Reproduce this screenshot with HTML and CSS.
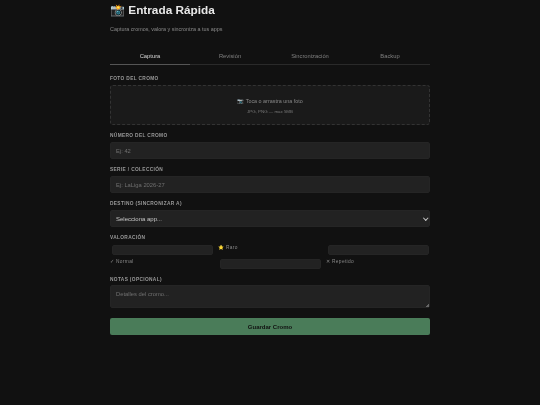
FILE: index.html
```html
<!DOCTYPE html>
<html lang="es">
<head>
    <meta charset="UTF-8">
    <meta name="viewport" content="width=device-width, initial-scale=1.0">
    <title>Entrada Rápida</title>
    <link rel="stylesheet" href="styles.css">
</head>
<body>
    <div class="container">
        <h1>📸 Entrada Rápida</h1>
        <p class="subtitle">Captura cromos, valora y sincroniza a tus apps</p>

        <div class="tabs">
            <div class="tab active">Captura</div>
            <div class="tab">Revisión</div>
            <div class="tab">Sincronización</div>
            <div class="tab">Backup</div>
        </div>

        <form>
            <div class="field">
                <label>Foto del cromo</label>
                <div class="upload">
                    <div class="upload-main">📷 Toca o arrastra una foto</div>
                    <div class="upload-hint">JPG, PNG — max 5MB</div>
                </div>
            </div>

            <div class="field">
                <label for="numero">Número del cromo</label>
                <input type="text" id="numero" placeholder="Ej: 42">
            </div>

            <div class="field">
                <label for="serie">Serie / Colección</label>
                <input type="text" id="serie" placeholder="Ej: LaLiga 2026-27">
            </div>

            <div class="field">
                <label for="destino">Destino (sincronizar a)</label>
                <div class="select-wrap">
                    <select id="destino">
                        <option>Selecciona app...</option>
                    </select>
                </div>
            </div>

            <div class="field">
                <label>Valoración</label>
                <!-- cada radio ocupa una celda, igual que su texto -->
                <div class="rating">
                    <input type="radio" name="valor" id="normal">
                    <span class="rating-text">⭐ Raro</span>
                    <input type="radio" name="valor" id="raro">
                    <span class="rating-text">✓ Normal</span>
                    <input type="radio" name="valor" id="repetido">
                    <span class="rating-text">✕ Repetido</span>
                </div>
            </div>

            <div class="field">
                <label class="notes-label" for="notas">Notas (opcional)</label>
                <div class="notes-wrap">
                    <textarea id="notas" placeholder="Detalles del cromo..."></textarea>
                </div>
            </div>

            <button type="button" class="save-button">Guardar Cromo</button>
        </form>
    </div>
</body>
</html>
```

FILE: styles.css
```css
* {
    box-sizing: border-box;
}

body {
    font-family: "Liberation Sans", Arial, sans-serif;
    margin: 0;
    height: 405px;
    overflow: hidden;
    background-color: #111111;
    color: #e0e0e0;
}

.container {
    width: 320px;
    margin: 0 auto;
    will-change: transform;
}

h1 {
    margin: 0;
    height: 19px;
    font-size: 11.8px;
    line-height: 20px;
    font-weight: 700;
    color: #e8e8e8;
}

.subtitle {
    margin: 6px 0 0;
    height: 8px;
    font-size: 5.4px;
    line-height: 8px;
    color: #8a8a8a;
}

.tabs {
    display: flex;
    margin-top: 16px;
    margin-bottom: 11px;
    border-bottom: 1px solid #2a2a2a;
}

.tab {
    flex: 1;
    height: 15px;
    font-size: 5.8px;
    line-height: 15px;
    text-align: center;
    color: #808080;
}

.tab.active {
    color: #d8d8d8;
    border-bottom: 1px solid #555555;
    height: 16px;
    margin-bottom: -1px;
}

.field {
    margin-bottom: 8px;
}

label {
    display: block;
    height: 5px;
    margin-bottom: 4px;
    font-size: 4.8px;
    line-height: 5px;
    font-weight: 700;
    letter-spacing: 0.35px;
    text-transform: uppercase;
    color: #999999;
}

.notes-label {
    margin-bottom: 3px;
}

.upload {
    height: 40px;
    padding-top: 11px;
    border: 1px dashed #333333;
    border-radius: 3px;
    background-color: #1a1a1a;
    text-align: center;
}

.upload-main {
    height: 9px;
    font-size: 5.4px;
    line-height: 9px;
    color: #888888;
}

.upload-hint {
    height: 8px;
    margin-top: 2px;
    font-size: 4.4px;
    line-height: 8px;
    color: #777777;
}

input[type="text"],
select,
textarea {
    display: block;
    width: 100%;
    height: 17px;
    padding: 0 5px;
    border: 1px solid #252525;
    border-radius: 2px;
    background-color: #222222;
    color: #e0e0e0;
    font-family: inherit;
    font-size: 5.8px;
}

::placeholder {
    color: #707070;
}

select {
    appearance: none;
    font-size: 6px;
    color: #c8c8c8;
}

/* flecha pequeña del select */
.select-wrap,
.notes-wrap {
    position: relative;
}

.select-wrap::after {
    content: "";
    position: absolute;
    right: 3px;
    top: 6px;
    width: 2.5px;
    height: 2.5px;
    border-right: 1px solid #c8c8c8;
    border-bottom: 1px solid #c8c8c8;
    transform: rotate(45deg);
}

.rating {
    display: grid;
    grid-template-columns: repeat(3, 1fr);
    column-gap: 4px;
    row-gap: 4px;
    margin-top: 5px;
}

.rating input {
    appearance: none;
    display: block;
    height: 10px;
    margin: 0 1px 0 2px;
    border: 1px solid #252525;
    border-radius: 2px;
    background-color: #222222;
}

.rating-text {
    height: 6px;
    font-size: 4.8px;
    line-height: 6px;
    letter-spacing: 0.35px;
    color: #888888;
}

textarea {
    height: 23px;
    padding: 5px;
    resize: none;
}

.notes-wrap::after {
    content: "";
    position: absolute;
    right: 1px;
    bottom: 1px;
    width: 3px;
    height: 3px;
    background: linear-gradient(135deg, transparent 50%, #666666 50%);
}

.save-button {
    display: block;
    width: 100%;
    height: 17px;
    margin-top: 10px;
    padding: 0;
    border: none;
    border-radius: 2px;
    background-color: #4a7c59;
    color: #111111;
    font-family: inherit;
    font-size: 6px;
    font-weight: 700;
}
```
